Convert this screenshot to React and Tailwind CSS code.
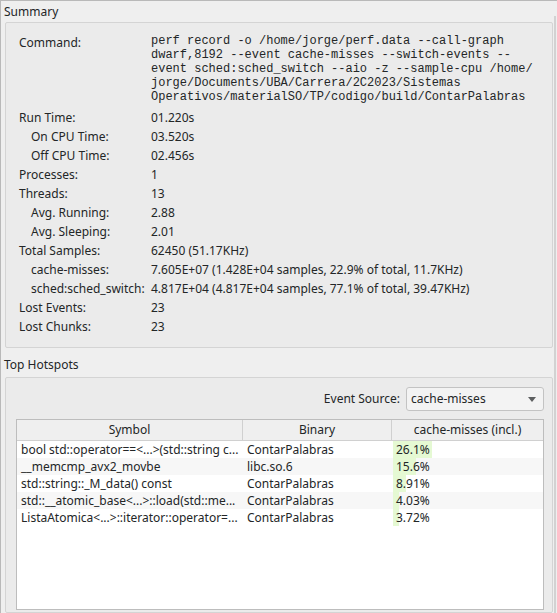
import React from 'react';

const cmd = [
  'perf record -o /home/jorge/perf.data --call-graph',
  'dwarf,8192 --event cache-misses --switch-events --',
  'event sched:sched_switch --aio -z --sample-cpu /home/',
  'jorge/Documents/UBA/Carrera/2C2023/Sistemas',
  'Operativos/materialSO/TP/codigo/build/ContarPalabras',
];

const rows = [
  ['Run Time:', '01.220s', 0],
  ['On CPU Time:', '03.520s', 1],
  ['Off CPU Time:', '02.456s', 1],
  ['Processes:', '1', 0],
  ['Threads:', '13', 0],
  ['Avg. Running:', '2.88', 1],
  ['Avg. Sleeping:', '2.01', 1],
  ['Total Samples:', '62450 (51.17KHz)', 0],
  ['cache-misses:', '7.605E+07 (1.428E+04 samples, 22.9% of total, 11.7KHz)', 1],
  ['sched:sched_switch:', '4.817E+04 (4.817E+04 samples, 77.1% of total, 39.47KHz)', 1],
  ['Lost Events:', '23', 0],
  ['Lost Chunks:', '23', 0],
];

const hotspots = [
  ['bool std::operator==<...>(std::string c...', 'ContarPalabras', 26.1],
  ['__memcmp_avx2_movbe', 'libc.so.6', 15.6],
  ['std::string::_M_data() const', 'ContarPalabras', 8.91],
  ['std::__atomic_base<...>::load(std::me...', 'ContarPalabras', 4.03],
  ['ListaAtomica<...>::iterator::operator=...', 'ContarPalabras', 3.72],
];

export default function App() {
  return (
    <div
      className="w-[557px] h-[613px] overflow-hidden bg-[#efefef] text-[#232627] text-[12px] leading-none border-t border-l border-[#b9b9b9] flex"
      style={{ fontFamily: '"Noto Sans", sans-serif' }}
    >
      <div className="flex-1 flex flex-col">
        {/* Summary */}
        <div className="h-[21px] pl-[3px] flex items-center">Summary</div>
        <div className="ml-[4px] mr-[1px] border border-[#d4d4d4] rounded-[2px] bg-[#ebebeb] pt-[11px] pb-[11px] pl-[13px]">
          <div className="flex">
            <div className="w-[132px] pt-[3px]">Command:</div>
            <div className="text-[12px] leading-[14px]" style={{ fontFamily: '"Liberation Mono", monospace' }}>
              {cmd.map((l, i) => (
                <div key={i} className="whitespace-pre">{l}</div>
              ))}
            </div>
          </div>
          <div className="mt-[4px] flex flex-col">
            {rows.map(([k, v, sub], i) => (
              <div key={i} className="flex h-[19px] items-center">
                <div className={sub ? 'w-[132px] pl-[12px]' : 'w-[132px]'}>{k}</div>
                <div className="whitespace-nowrap">{v}</div>
              </div>
            ))}
          </div>
        </div>

        {/* Top Hotspots */}
        <div className="h-[29px] pl-[3px] pt-[4px] flex items-center">Top Hotspots</div>
        <div className="ml-[4px] mr-[1px] flex-1 border border-[#d4d4d4] rounded-[2px] bg-[#ebebeb] pt-[9px] pl-[10px] pr-[8px] pb-[2px] flex flex-col">
          <div className="flex justify-end items-center gap-[6px]">
            <span>Event Source:</span>
            <div className="w-[138px] h-[24px] border border-[#c3c3c3] rounded-[3px] bg-[#f3f3f3] flex items-center pl-[4px] pr-[7px] justify-between">
              <span>cache-misses</span>
              <svg width="8" height="5" viewBox="0 0 8 5">
                <path d="M0 0 L8 0 L4 5 Z" fill="#5d5f60" />
              </svg>
            </div>
          </div>
          <div className="mt-[8px] flex-1 border border-[#bdbdbd] bg-white flex flex-col">
            <div className="flex h-[21px] bg-[#efefef] border-b border-[#d0d0d0]">
              <div className="w-[226px] border-r border-[#d0d0d0] flex items-center justify-center">Symbol</div>
              <div className="w-[149px] border-r border-[#d0d0d0] flex items-center justify-center">Binary</div>
              <div className="flex-1 flex items-center justify-center">cache-misses (incl.)</div>
            </div>
            {hotspots.map(([s, b, p], i) => (
              <div key={i} className={i % 2 ? 'flex h-[17px] bg-[#f7f7f7]' : 'flex h-[17px] bg-white'}>
                <div className="w-[227px] pl-[4px] flex items-center whitespace-nowrap overflow-hidden">{s}</div>
                <div className="w-[149px] pl-[3px] flex items-center">{b}</div>
                <div className="flex-1 relative flex items-center">
                  <div className="absolute left-0 top-0 bottom-0 bg-[#e5f9d3]" style={{ width: `${p}%` }} />
                  <span className="relative pl-[3px]">{p}%</span>
                </div>
              </div>
            ))}
          </div>
        </div>
      </div>
      <div className="w-[3px] flex flex-col">
        <div className="h-[15px]" />
        <div className="flex-1 w-[2px] bg-[#d2d2d2]" />
      </div>
    </div>
  );
}
